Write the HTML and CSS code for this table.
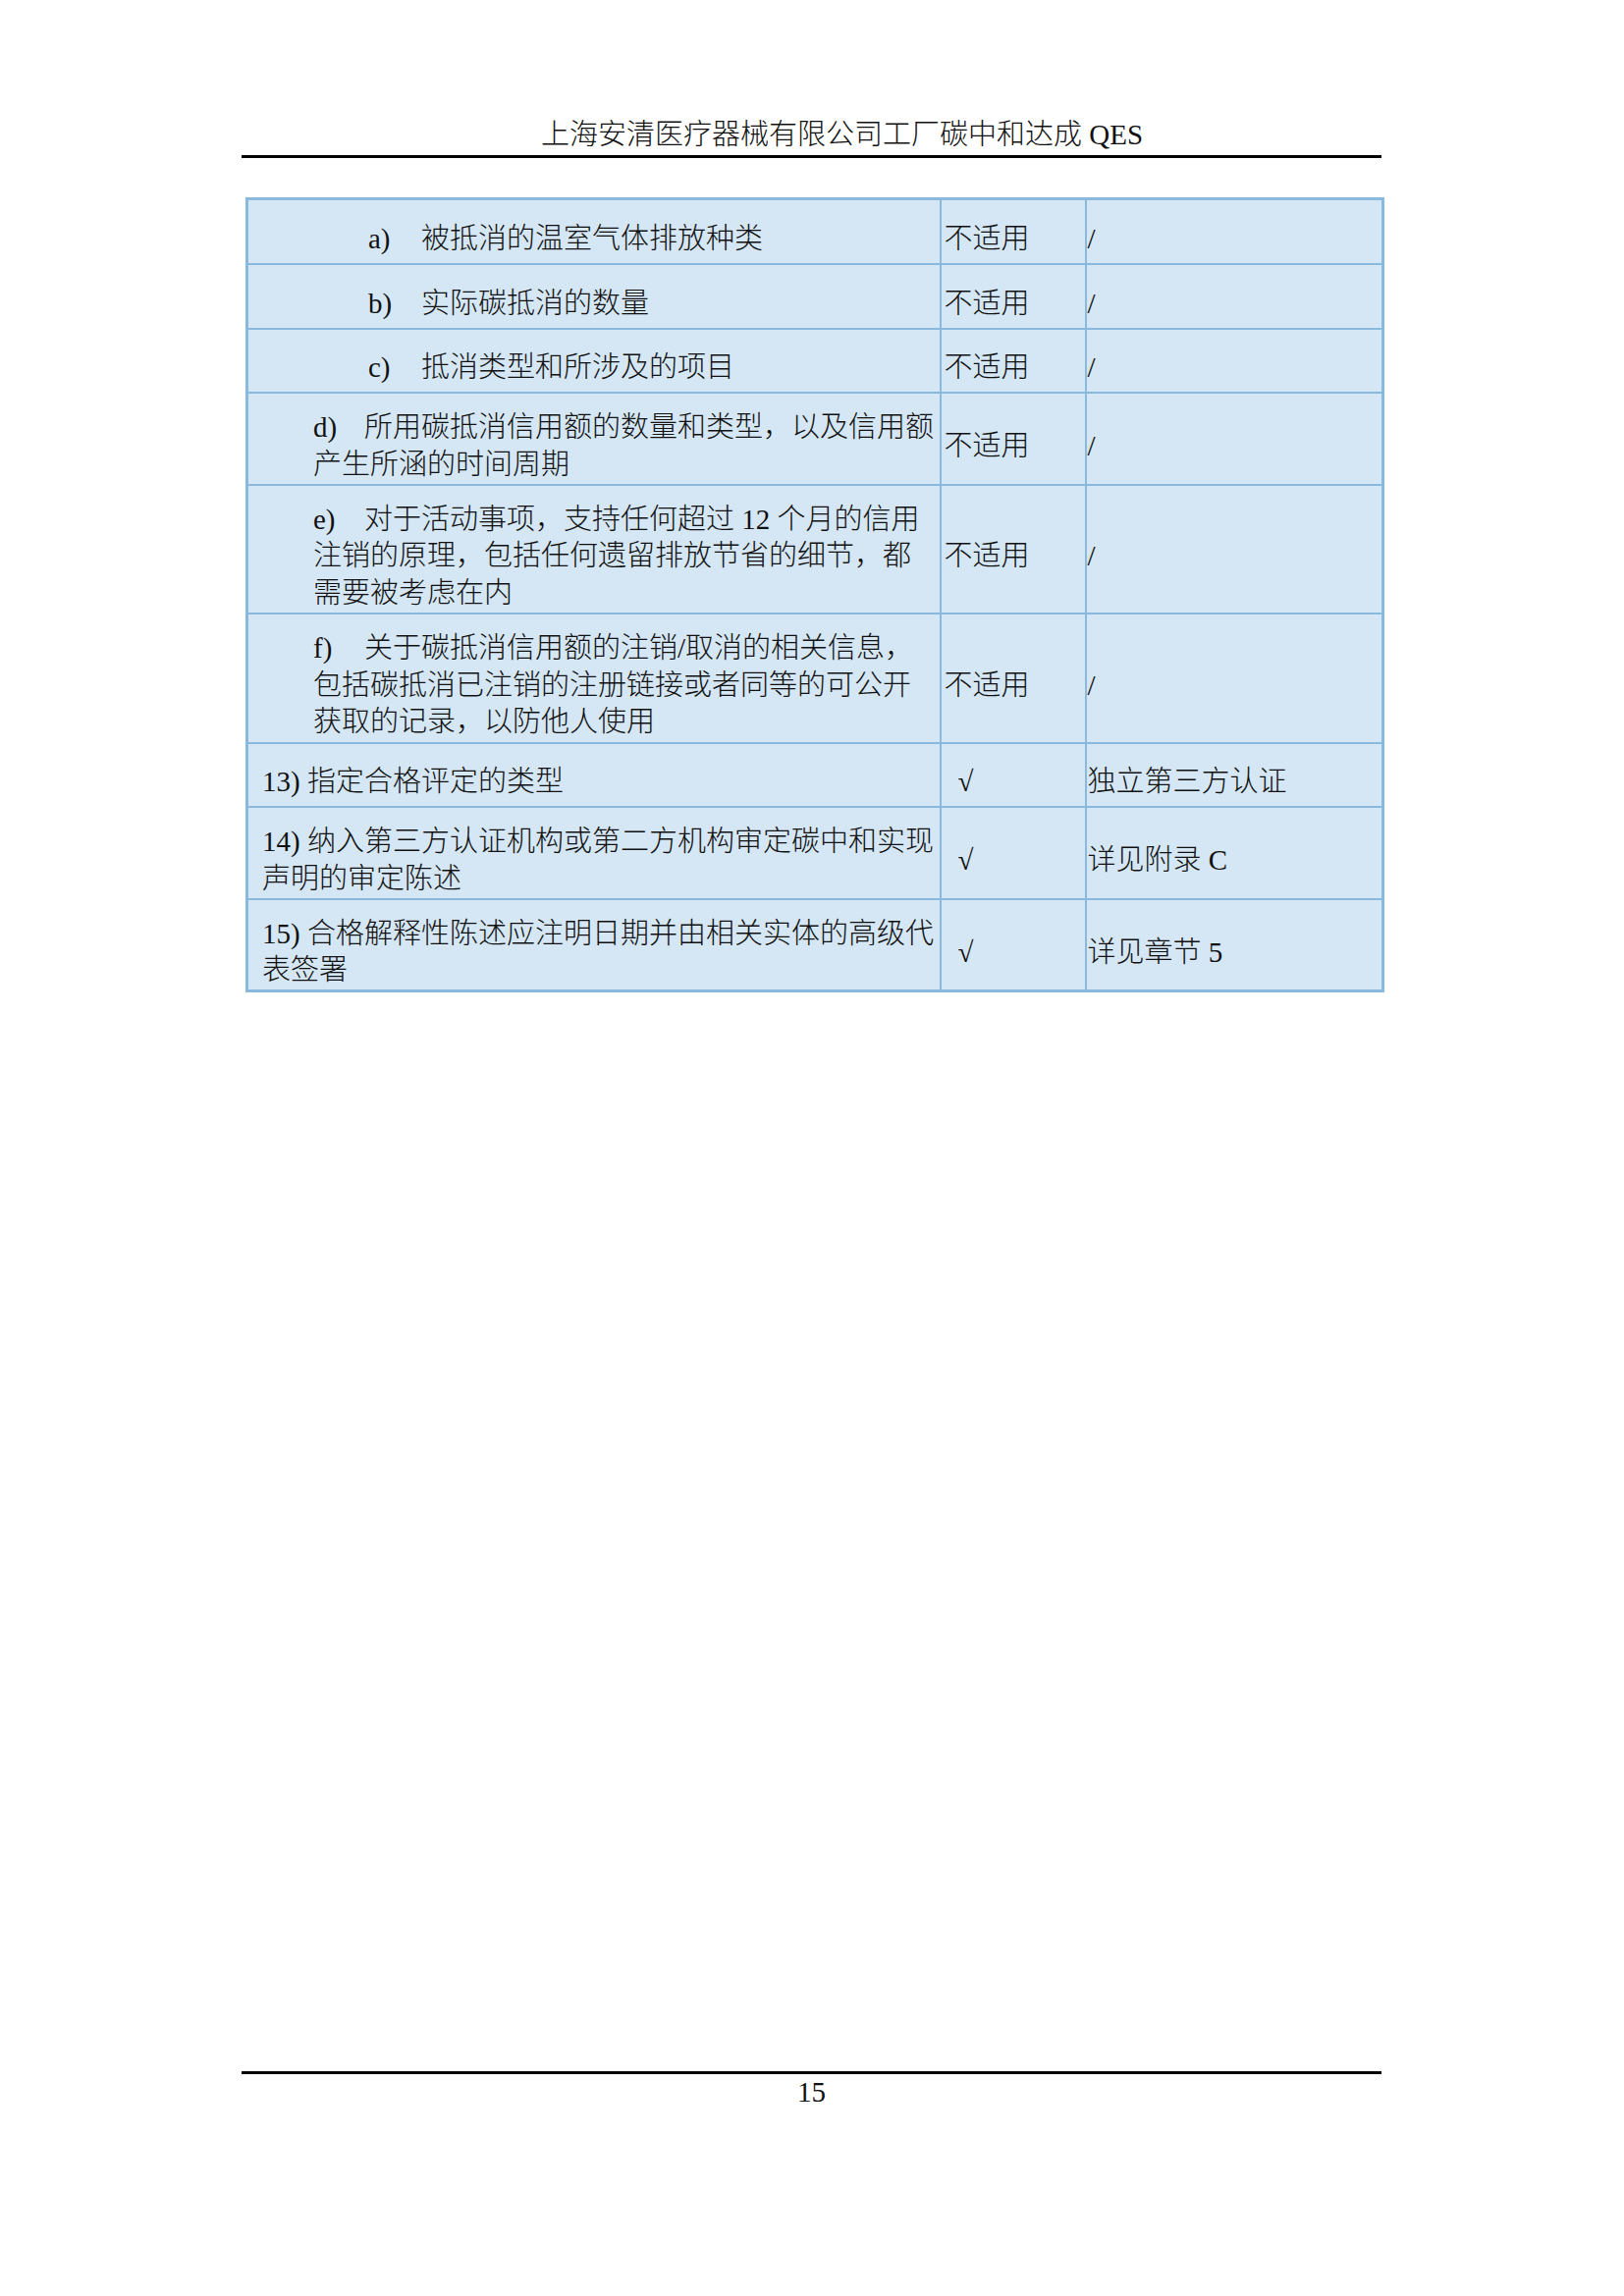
FILE: index.html
```html
<!DOCTYPE html>
<html lang="zh-CN">
<head>
<meta charset="utf-8">
<title>上海安清医疗器械有限公司工厂碳中和达成 QES</title>
<link rel="stylesheet" href="styles.css">
</head>
<body>
<div class="page">
  <header class="header">
    <div class="header-text">上海安清医疗器械有限公司工厂碳中和达成 QES</div>
  </header>

  <table class="qes">
    <colgroup>
      <col class="c1">
      <col class="c2">
      <col class="c3">
    </colgroup>
    <tbody>
      <tr class="h1">
        <td class="item"><span class="ln ind2"><span class="lbl2">a)</span>被抵消的温室气体排放种类</span></td>
        <td class="st">不适用</td>
        <td class="nt">/</td>
      </tr>
      <tr class="h1">
        <td class="item"><span class="ln ind2"><span class="lbl2">b)</span>实际碳抵消的数量</span></td>
        <td class="st">不适用</td>
        <td class="nt">/</td>
      </tr>
      <tr class="h1b">
        <td class="item"><span class="ln ind2"><span class="lbl2">c)</span>抵消类型和所涉及的项目</span></td>
        <td class="st">不适用</td>
        <td class="nt">/</td>
      </tr>
      <tr class="h2">
        <td class="item">
          <span class="ln ind1"><span class="lbl1">d)</span>所用碳抵消信用额的数量和类型，以及信用额</span>
          <span class="ln ind1">产生所涵的时间周期</span>
        </td>
        <td class="st">不适用</td>
        <td class="nt">/</td>
      </tr>
      <tr class="h3">
        <td class="item">
          <span class="ln ind1"><span class="lbl1">e)</span>对于活动事项，支持任何超过 12 个月的信用</span>
          <span class="ln ind1">注销的原理，包括任何遗留排放节省的细节，都</span>
          <span class="ln ind1">需要被考虑在内</span>
        </td>
        <td class="st">不适用</td>
        <td class="nt">/</td>
      </tr>
      <tr class="h3b">
        <td class="item">
          <span class="ln ind1"><span class="lbl1">f)</span>关于碳抵消信用额的注销/取消的相关信息，</span>
          <span class="ln ind1">包括碳抵消已注销的注册链接或者同等的可公开</span>
          <span class="ln ind1">获取的记录，以防他人使用</span>
        </td>
        <td class="st">不适用</td>
        <td class="nt">/</td>
      </tr>
      <tr class="h1b">
        <td class="item"><span class="ln">13) 指定合格评定的类型</span></td>
        <td class="st"><span class="tick">√</span></td>
        <td class="nt">独立第三方认证</td>
      </tr>
      <tr class="h2">
        <td class="item">
          <span class="ln">14) 纳入第三方认证机构或第二方机构审定碳中和实现</span>
          <span class="ln">声明的审定陈述</span>
        </td>
        <td class="st"><span class="tick">√</span></td>
        <td class="nt">详见附录 C</td>
      </tr>
      <tr class="h2">
        <td class="item">
          <span class="ln">15) 合格解释性陈述应注明日期并由相关实体的高级代</span>
          <span class="ln">表签署</span>
        </td>
        <td class="st"><span class="tick">√</span></td>
        <td class="nt">详见章节 5</td>
      </tr>
    </tbody>
  </table>

  <footer class="footer">
    <div class="page-no">15</div>
  </footer>
</div>
</body>
</html>
```

FILE: styles.css
```css
html, body {
  margin: 0;
  padding: 0;
  background: #ffffff;
}

body {
  font-family: "Liberation Serif", "Noto Sans CJK SC", serif;
  font-size: 29px;
  color: #111111;
}

.page {
  width: 1654px;
  height: 2339px;
  box-sizing: border-box;
  display: flex;
  flex-direction: column;
  padding: 118px 0 190px 0;
}

.header {
  margin-left: 246px;
  width: 1161px;
  border-bottom: 3px solid #000000;
  padding-bottom: 2px;
}

.header-text {
  line-height: 38px;
  text-align: center;
  padding-left: 62px;
  white-space: nowrap;
  font-weight: 300;
}

.qes {
  margin-left: 250px;
  margin-top: 40px;
  width: 1157px;
  border-collapse: collapse;
  table-layout: fixed;
  background: #d5e7f5;
  border: 3px solid #8ab9de;
}

.c1 { width: 706px; }
.c2 { width: 148px; }
.c3 { width: 303px; }

.qes td {
  border: 2px solid #8ab9de;
  padding: 16px 0 0 0;
  vertical-align: middle;
  line-height: 37.5px;
  font-weight: 300;
  white-space: nowrap;
  overflow: hidden;
}

.h1 { height: 66px; }
.h1b { height: 65px; }
.h2 { height: 94px; }
.h3 { height: 131px; }
.h3b { height: 132px; }

.qes td.item {
  padding-left: 14px;
}

.qes td.st {
  padding-left: 3px;
}

.qes td.nt {
  padding-left: 1px;
}

.ln {
  display: block;
}

.ind1 { padding-left: 52px; }
.ind2 { padding-left: 108px; }

.lbl1 {
  display: inline-block;
  width: 52px;
}

.lbl2 {
  display: inline-block;
  width: 54px;
}

.tick {
  padding-left: 14px;
}

.footer {
  margin-top: auto;
  margin-left: 246px;
  width: 1161px;
  border-top: 3px solid #000000;
}

.page-no {
  line-height: 36px;
  text-align: center;
}
```
